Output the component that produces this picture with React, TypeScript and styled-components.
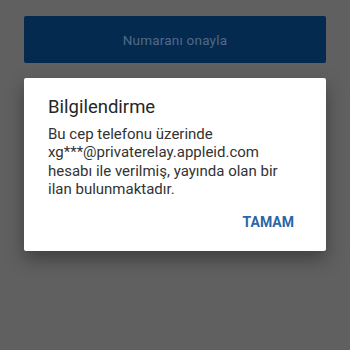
import React from 'react';
import styled, { createGlobalStyle } from 'styled-components';

const Global = createGlobalStyle`
  html, body {
    margin: 0;
    padding: 0;
    background: #606060;
  }
  body {
    font-family: Roboto, "Liberation Sans", sans-serif;
  }
`;

const Screen = styled.div`
  width: 350px;
  height: 350px;
  box-sizing: border-box;
  padding: 16px 24px 0;
  display: flex;
  flex-direction: column;
  gap: 15px;
  background: #606060;
`;

const ConfirmButton = styled.div`
  height: 47px;
  background: #052a50;
  border-radius: 2px;
  display: flex;
  align-items: center;
  justify-content: center;
  color: #51698a;
  font-size: 13.5px;
  letter-spacing: 0.2px;
`;

const Dialog = styled.div`
  background: #ffffff;
  border-radius: 2px;
  box-shadow: 0 8px 18px rgba(0, 0, 0, 0.35);
  padding: 17px 24px 20px;
  display: flex;
  flex-direction: column;
`;

const Title = styled.h2`
  margin: 0 0 6px;
  font-size: 18.5px;
  font-weight: 400;
  line-height: 24px;
  color: #262626;
`;

const Message = styled.p`
  margin: 0;
  font-size: 15px;
  line-height: 18.3px;
  color: #333333;
`;

const Actions = styled.div`
  display: flex;
  justify-content: flex-end;
  margin-top: 15px;
  padding-right: 8px;
`;

const TextButton = styled.button`
  border: none;
  background: none;
  padding: 0;
  font-family: inherit;
  font-size: 14px;
  font-weight: 700;
  line-height: 18px;
  color: #2a66a8;
`;

export default function App() {
  return (
    <>
      <Global />
      <Screen>
        <ConfirmButton>Numaranı onayla</ConfirmButton>
        <Dialog>
          <Title>Bilgilendirme</Title>
          <Message>
            Bu cep telefonu üzerinde
            <br />
            xg***@privaterelay.appleid.com
            <br />
            hesabı ile verilmiş, yayında olan bir
            <br />
            ilan bulunmaktadır.
          </Message>
          <Actions>
            <TextButton>TAMAM</TextButton>
          </Actions>
        </Dialog>
      </Screen>
    </>
  );
}
